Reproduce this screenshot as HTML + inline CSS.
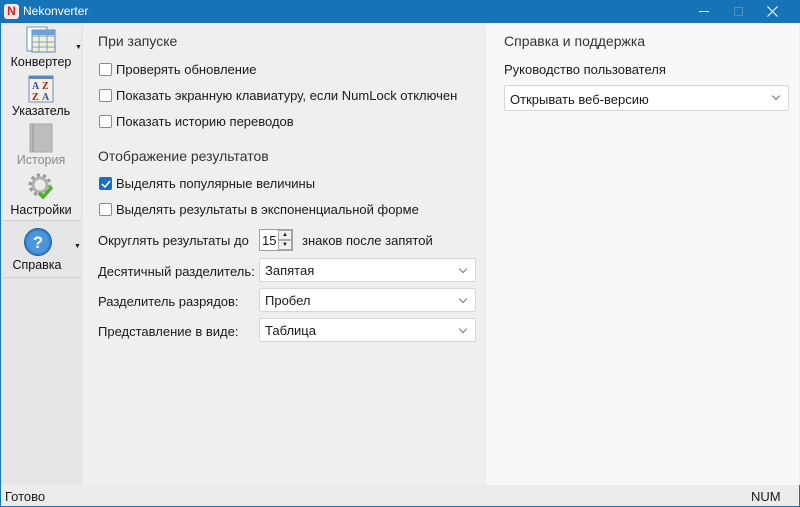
<!DOCTYPE html>
<html><head><meta charset="utf-8"><style>
*{margin:0;padding:0;box-sizing:border-box}
body{width:800px;height:507px;overflow:hidden;font-family:"Liberation Sans","DejaVu Sans",sans-serif;font-size:13px;color:#1a1a1a;background:#efefef;position:relative}
.a{position:absolute;white-space:nowrap}
.cb{position:absolute;width:13px;height:13px;border:1px solid #8a8a8a;background:#fff;border-radius:2px}
.sel{position:absolute;height:24px;background:#fff;border:1px solid #d6d6d6;border-radius:2px;padding:4px 5px;}
.sel:after{content:"";position:absolute;right:9px;top:7px;width:5px;height:5px;border-right:1px solid #777;border-bottom:1px solid #777;transform:rotate(45deg)}
h3{position:absolute;font-size:14px;font-weight:normal;color:#333;white-space:nowrap}
.nav{position:absolute;left:0;width:82px;text-align:center;font-size:12px;color:#111}
</style></head><body>
<div class="a" style="left:0;top:0;width:800px;height:23px;background:#1673b6"></div>
<div class="a" style="left:4px;top:4px;width:15px;height:15px;background:#f4e7e7;border-radius:3px;color:#c22;font-weight:bold;font-size:12px;text-align:center;line-height:15px">N</div>
<div class="a" style="left:23px;top:4px;color:#fff;font-size:12px">Nekonverter</div>
<div class="a" style="left:699px;top:11px;width:10px;height:1px;background:#fff"></div>
<div class="a" style="left:734px;top:7px;width:9px;height:9px;border:1px solid #4d93c8"></div>
<svg class="a" style="left:767px;top:6px" width="11" height="11"><path d="M0.5 0.5l10 10M10.5 0.5l-10 10" stroke="#fff" stroke-width="1.2"/></svg>

<div class="a" style="left:0;top:23px;width:83px;height:462px;background:#e6e6e6;border-left:1px solid #1673b6"></div>
<div class="a" style="left:3px;top:25px;width:78px;height:195px;background:#ececec"></div>
<div class="a" style="left:3px;top:220px;width:78px;height:1px;background:#cfcfcf"></div>
<div class="a" style="left:3px;top:277px;width:78px;height:1px;background:#cfcfcf"></div>
<svg class="a" style="left:26px;top:26px" width="30" height="28"><rect x="1" y="1" width="20" height="24" fill="#fff" stroke="#6a8fc0"/><rect x="6" y="4" width="23" height="22" fill="#f4f0d0" stroke="#5d86b8"/><path d="M6 10h23M6 16h23M6 21h23M13 4v22M21 4v22" stroke="#7aa0cc"/><rect x="6" y="4" width="23" height="5" fill="#6fa1d6"/></svg>
<div class="a" style="left:75px;top:44px;font-size:7px">▼</div>
<div class="nav" style="top:55px;font-size:12.5px">Конвертер</div>
<svg class="a" style="left:28px;top:75px" width="26" height="28"><rect x="1" y="1" width="24" height="26" fill="#f5f0e6" stroke="#6a8fc0"/><rect x="1" y="1" width="24" height="3" fill="#5d86b8"/><text x="4" y="14" font-size="10" font-weight="bold" fill="#2a4f9a" font-family="Liberation Serif">A</text><text x="14" y="14" font-size="10" font-weight="bold" fill="#a02020" font-family="Liberation Serif">Z</text><text x="4" y="25" font-size="10" font-weight="bold" fill="#a02020" font-family="Liberation Serif">Z</text><text x="14" y="25" font-size="10" font-weight="bold" fill="#2a4f9a" font-family="Liberation Serif">A</text></svg>
<div class="nav" style="top:104px;font-size:12.5px">Указатель</div>
<svg class="a" style="left:29px;top:123px" width="24" height="30"><rect x="1" y="1" width="22" height="28" fill="#bdbdbd" stroke="#a8a8a8"/><rect x="3" y="1" width="2" height="28" fill="#a5a5a5"/></svg>
<div class="nav" style="top:153px;color:#8a8a8a;font-size:12.5px">История</div>
<svg class="a" style="left:27px;top:172px" width="28" height="30"><circle cx="13" cy="13" r="9" fill="none" stroke="#9a9a9a" stroke-width="5" stroke-dasharray="3 2.6"/><circle cx="13" cy="13" r="7" fill="none" stroke="#b0b0b0" stroke-width="3"/><path d="M12 21l4 4 9-10" stroke="#4caf27" stroke-width="3.5" fill="none"/></svg>
<div class="nav" style="top:203px;font-size:12.5px">Настройки</div>
<svg class="a" style="left:23px;top:227px" width="30" height="30"><circle cx="15" cy="15" r="13.5" fill="#3b82cc" stroke="#1e5f9e"/><circle cx="15" cy="15" r="11" fill="#4c95dc"/><text x="15" y="21" text-anchor="middle" font-size="17" font-weight="bold" fill="#fff" font-family="Liberation Sans">?</text></svg>
<div class="a" style="left:74px;top:243px;font-size:7px">▼</div>
<div class="nav" style="top:258px;left:-4px;font-size:12.5px">Справка</div>

<div class="a" style="left:486px;top:23px;width:313px;height:462px;background:#f8f8f8"></div>

<h3 style="left:98px;top:33px">При запуске</h3>
<div class="cb" style="left:99px;top:63px"></div><div class="a" style="left:116px;top:62px">Проверять обновление</div>
<div class="cb" style="left:99px;top:89px"></div><div class="a" style="left:116px;top:88px">Показать экранную клавиатуру, если NumLock отключен</div>
<div class="cb" style="left:99px;top:115px"></div><div class="a" style="left:116px;top:114px">Показать историю переводов</div>
<h3 style="left:98px;top:148px">Отображение результатов</h3>
<div class="cb" style="left:99px;top:177px;background:#1a6fc2;border-color:#1a6fc2"></div>
<svg class="a" style="left:101px;top:179px" width="10" height="10"><path d="M1 5l3 3 5-6" stroke="#fff" stroke-width="1.5" fill="none"/></svg>
<div class="a" style="left:116px;top:176px">Выделять популярные величины</div>
<div class="cb" style="left:99px;top:203px"></div><div class="a" style="left:116px;top:202px">Выделять результаты в экспоненциальной форме</div>

<div class="a" style="left:98px;top:233px">Округлять результаты до</div>
<div class="a" style="left:259px;top:229px;width:34px;height:22px;background:#fff;border:1px solid #a0a0a0"></div>
<div class="a" style="left:262px;top:233px">15</div>
<div class="a" style="left:278px;top:230px;width:14px;height:10px;background:#f0f0f0;border:1px solid #aaa;font-size:6px;text-align:center;line-height:8px">▲</div>
<div class="a" style="left:278px;top:240px;width:14px;height:10px;background:#f0f0f0;border:1px solid #aaa;font-size:6px;text-align:center;line-height:8px">▼</div>
<div class="a" style="left:302px;top:233px">знаков после запятой</div>

<div class="a" style="left:98px;top:264px">Десятичный разделитель:</div>
<div class="sel" style="left:259px;top:258px;width:217px">Запятая</div>
<div class="a" style="left:98px;top:294px">Разделитель разрядов:</div>
<div class="sel" style="left:259px;top:288px;width:217px">Пробел</div>
<div class="a" style="left:98px;top:324px">Представление в виде:</div>
<div class="sel" style="left:259px;top:318px;width:217px">Таблица</div>

<h3 style="left:504px;top:33px">Справка и поддержка</h3>
<div class="a" style="left:504px;top:62px">Руководство пользователя</div>
<div class="sel" style="left:504px;top:85px;width:285px;height:26px;padding-top:6px">Открывать веб-версию</div>

<div class="a" style="left:0;top:485px;width:800px;height:22px;background:#ececec;border-left:1px solid #1673b6;border-right:1px solid #1673b6;border-bottom:1px solid #1673b6"></div>
<div class="a" style="left:5px;top:489px">Готово</div>
<div class="a" style="left:751px;top:489px">NUM</div>
</body></html>
